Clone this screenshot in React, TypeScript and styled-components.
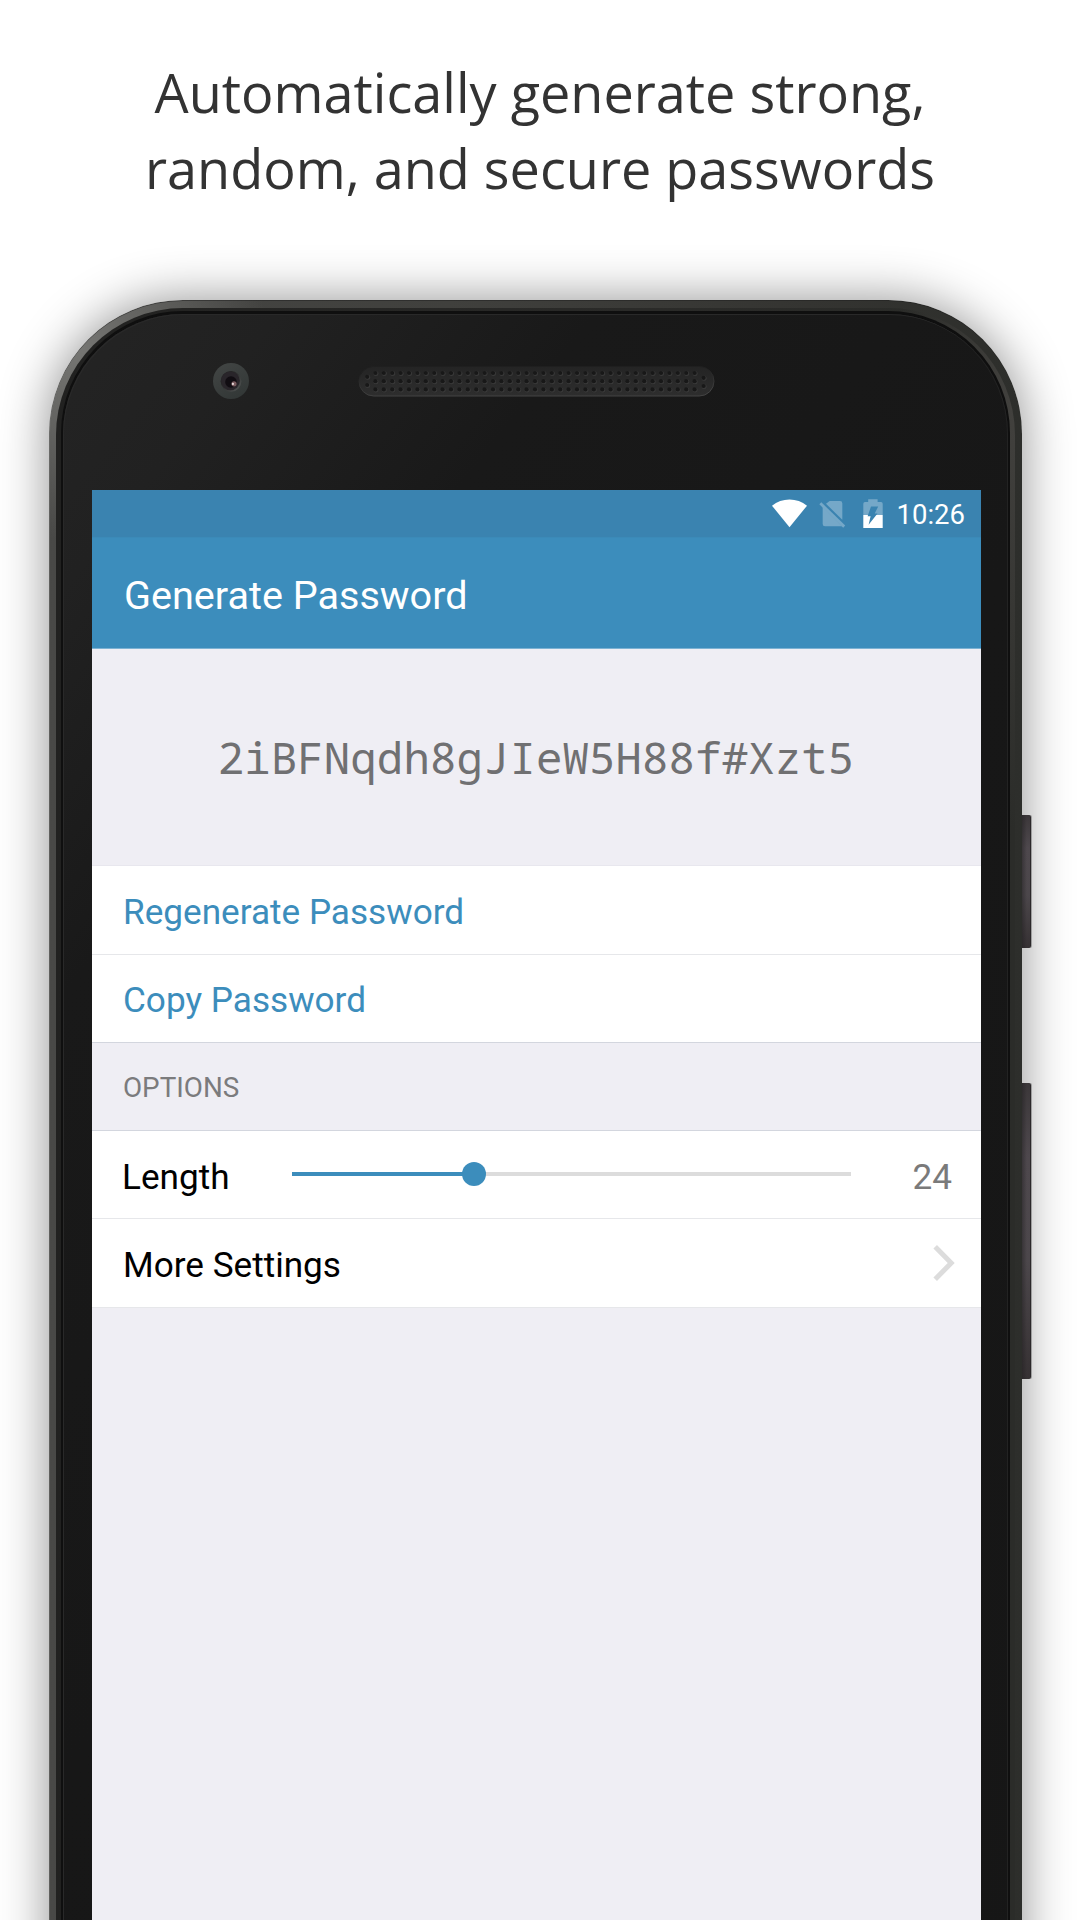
import React from 'react';
import styled, { createGlobalStyle } from 'styled-components';

const BLUE = '#3c8dbc';

const GlobalStyle = createGlobalStyle`
  *, *::before, *::after { box-sizing: border-box; }
  html, body { margin: 0; padding: 0; background: #fff; }
`;

const Page = styled.main`
  display: flex;
  flex-direction: column;
  width: 1080px;
  height: 1920px;
  overflow: hidden;
  background: #fff;
  font-family: Roboto, "Liberation Sans", sans-serif;
`;

const Headline = styled.h1`
  flex: none;
  height: 300px;
  margin: 0;
  padding-top: 55px;
  font-family: "Open Sans", "Noto Sans", sans-serif;
  font-size: 54px;
  font-weight: 400;
  line-height: 75.7px;
  text-align: center;
  color: #333;
`;

/* Phone body: metal edge, inner rim, black seam, glass */
const Body = styled.div`
  position: relative;
  flex: none;
  width: 973px;
  height: 1900px;
  margin-left: 49px;
  padding: 8px 7px 0;
  border-radius: 134px 134px 0 0;
  background:
    radial-gradient(circle at 30px 50px, rgba(120, 120, 117, 0.95), rgba(90, 90, 88, 0) 190px),
    linear-gradient(to right, #494947 0, #454543 50px, #40403d 400px, #343431 760px, #2d2e2b 100%);
  box-shadow: 0 0 50px rgba(0, 0, 0, 0.44), inset 0 1px 0 rgba(30, 30, 30, 0.5), inset 1px 0 0 rgba(120, 120, 118, 0.5);
`;

const Rim = styled.div`
  height: 100%;
  padding: 3px 5px 0;
  border-radius: 127px 127px 0 0;
  background:
    radial-gradient(ellipse 120px 420px at 100% 100px, #42413e, rgba(61, 60, 57, 0)),
    linear-gradient(to right, #212120, #2a2a28 60%, #2b2c29);
`;

const Seam = styled.div`
  height: 100%;
  padding: 3px 2px 0;
  border-radius: 122px 122px 0 0;
  background: #0f0f0f;
`;

const Glass = styled.div`
  display: flex;
  flex-direction: column;
  height: 100%;
  padding: 0 27px 0 29px;
  border-radius: 120px 120px 0 0;
  background: linear-gradient(128deg, #242424 0, #212121 170px, #191919 420px, #171717 900px, #161616 100%);
  box-shadow: inset 1px 1px 0 #292929, inset -1px 0 0 #232323;
`;

const Brow = styled.div`
  display: flex;
  align-items: flex-start;
  flex: none;
  height: 176px;
  padding: 49px 0 0 120px;
`;

const Speaker = styled.svg`
  margin: 3px 0 0 108px;
`;

const SideButton = styled.div<{ $top: number; $height: number }>`
  position: absolute;
  left: 973px;
  top: ${(p) => p.$top}px;
  width: 9px;
  height: ${(p) => p.$height}px;
  border-right: 1px solid #2b282a;
  border-radius: 0 2px 2px 0;
  background:
    linear-gradient(to right, rgba(30, 28, 30, 0.45), transparent 60%),
    linear-gradient(#3b3739, #4e484d 25%, #4c474b 60%, #363133);
  box-shadow: 1px 0 0 rgba(90, 90, 90, 0.45);
`;

const Screen = styled.section`
  display: flex;
  flex-direction: column;
  flex: 1;
  background: #efeef4;
`;

const StatusBar = styled.div`
  display: flex;
  justify-content: flex-end;
  align-items: flex-start;
  flex: none;
  height: 47px;
  padding-right: 16px;
  background: #3a83b0;
`;

const StatusIcons = styled.svg`
  flex: none;
  margin-right: 4px;
`;

const Clock = styled.time`
  font-size: 27.5px;
  line-height: 50px;
  color: #fff;
`;

const AppBar = styled.header`
  display: flex;
  align-items: center;
  flex: none;
  height: 112px;
  padding: 5px 32px 0;
  border-top: 1px solid #3b8ab8;
  border-bottom: 1px solid #7db2d3;
  background: ${BLUE};
`;

const Title = styled.h2`
  margin: 0;
  font-size: 39.6px;
  font-weight: 400;
  line-height: 46px;
  color: #fff;
`;

const Generated = styled.output`
  display: flex;
  justify-content: center;
  align-items: center;
  flex: none;
  height: 217px;
  padding-right: 1px;
  border-bottom: 1px solid #e8e7ee;
  font-family: "Noto Sans Mono", "DejaVu Sans Mono", monospace;
  font-size: 44px;
  letter-spacing: 0.12px;
  color: #707072;
`;

const Row = styled.div<{ $tone?: string; $line?: string; $height?: number; $left?: number; $drop?: number }>`
  display: flex;
  align-items: center;
  flex: none;
  height: ${(p) => p.$height ?? 88}px;
  padding: ${(p) => p.$drop ?? 3}px 26px 0 ${(p) => p.$left ?? 31}px;
  border-bottom: 1px solid ${(p) => p.$line ?? '#e6e7ea'};
  background: #fff;
  font-size: 35.15px;
  color: ${(p) => p.$tone ?? '#000'};
`;

const SectionHeader = styled.div`
  display: flex;
  align-items: center;
  flex: none;
  height: 88px;
  padding: 2px 31px 0;
  border-bottom: 1px solid #d3d6de;
  font-size: 27.8px;
  color: #7b7b7d;
`;

const Label = styled.span`
  width: 170px;
`;

const Track = styled.div<{ $percent: number }>`
  display: flex;
  align-items: center;
  width: 559px;
  height: 4px;
  margin-bottom: 6px;
  background: linear-gradient(to right, ${BLUE} ${(p) => p.$percent}%, #dcdcdc ${(p) => p.$percent}%);
`;

const Thumb = styled.i<{ $percent: number }>`
  flex: none;
  width: 24px;
  height: 24px;
  margin-left: calc(${(p) => p.$percent}% - 12px);
  border-radius: 50%;
  background: ${BLUE};
`;

const Value = styled.span`
  margin-left: auto;
  margin-right: 3px;
  color: #7a7a7a;
`;

const Chevron = styled.svg`
  margin-left: auto;
  margin-bottom: 3px;
`;

const COLUMNS = Array.from({ length: 39 }, (_, i) => 17.4 + i * 8.4);
const HOLES: [number, number][] = [
  ...COLUMNS.flatMap((x) => [7, 15.2, 23.4].map((y) => [x, y] as [number, number])),
  [9.2, 10.8], [9.2, 19], [345.6, 11.8], [345.6, 20],
];

const Camera = () => (
  <svg width="38" height="38" viewBox="0 0 38 38">
    <defs>
      <linearGradient id="ring" x1="0" y1="0" x2="0.6" y2="1">
        <stop offset="0" stopColor="#434645" />
        <stop offset="1" stopColor="#333837" />
      </linearGradient>
      <linearGradient id="lip" x1="0" y1="0" x2="1" y2="1">
        <stop offset="0.3" stopColor="#252525" />
        <stop offset="1" stopColor="#565a59" />
      </linearGradient>
    </defs>
    <circle cx="19" cy="18" r="18" fill="url(#ring)" />
    <circle cx="19" cy="18.3" r="10.4" fill="url(#lip)" />
    <circle cx="18.4" cy="17.8" r="9.4" fill="#29252a" />
    <circle cx="19" cy="19" r="5.8" fill="#110d12" />
    <circle cx="22" cy="20.8" r="2.6" fill="#7b5c60" />
    <circle cx="20.9" cy="20.9" r="1.1" fill="#e6dcdc" />
  </svg>
);

const Grille = () => (
  <Speaker width="357" height="32" viewBox="0 0 357 32">
    <defs>
      <linearGradient id="grille" x1="0" y1="0" x2="0" y2="1">
        <stop offset="0" stopColor="#242424" />
        <stop offset="1" stopColor="#2e2e2e" />
      </linearGradient>
      <linearGradient id="edge" x1="0" y1="0" x2="0.25" y2="1">
        <stop offset="0.25" stopColor="#1f1f1f" />
        <stop offset="1" stopColor="#434343" />
      </linearGradient>
    </defs>
    <rect x="1" y="0.5" width="355" height="29.5" rx="14.7" fill="url(#grille)" stroke="url(#edge)" />
    {HOLES.map(([x, y], i) => (
      <g key={i}>
        <circle cx={x + 0.5} cy={y + 0.5} r="2.5" fill="#393939" />
        <circle cx={x} cy={y} r="2.1" fill="#181818" />
      </g>
    ))}
  </Speaker>
);

/* Wi-Fi, missing SIM and charging battery glyphs */
const Indicators = () => (
  <StatusIcons width="122" height="47" viewBox="771 490 122 47">
    <path d="M789.5 527.2 L772 505.7 C777 501.7 783 499.6 789.5 499.6 C796 499.6 802 501.7 807 505.7 Z" fill="#fff" />
    <g fill="#75a8c8">
      <path d="M829.6 501 H840 Q842.3 501 842.3 503.3 V519.8 L826 503.8 Z" />
      <path d="M822.7 506.8 L842 526.2 H825 Q822.7 526.2 822.7 524 Z" />
      <path d="M819.3 504.2 L821.3 502.2 L845.2 525.6 L843.2 527.8 Z" />
      <path d="M868.2 499.2 H877.6 V502 H881 Q882.7 502 882.7 503.8 V515 H863.3 V503.8 Q863.3 502 865 502 H868.2 Z" />
    </g>
    <path d="M863.3 515 H882.7 V528 H863.3 Z" fill="#fff" />
    <path d="M871 506.5 H878.2 L874.7 513.5 H877.5 L868.6 524.8 L870.6 516.3 H867.6 Z" fill="#3a83b0" />
  </StatusIcons>
);

const percent = 32.5;

export default function App() {
  return (
    <Page>
      <GlobalStyle />
      <Headline>
        Automatically generate strong,
        <br />
        random, and secure passwords
      </Headline>
      <Body>
        <SideButton $top={515} $height={133} />
        <SideButton $top={783} $height={296} />
        <Rim>
          <Seam>
            <Glass>
              <Brow>
                <Camera />
                <Grille />
              </Brow>
              <Screen>
                <StatusBar>
                  <Indicators />
                  <Clock>10:26</Clock>
                </StatusBar>
                <AppBar>
                  <Title>Generate Password</Title>
                </AppBar>
                <Generated>2iBFNqdh8gJIeW5H88f#Xzt5</Generated>
                <Row $tone={BLUE} $height={89}>Regenerate Password</Row>
                <Row $tone={BLUE} $line="#d3d6de">Copy Password</Row>
                <SectionHeader>OPTIONS</SectionHeader>
                <Row $left={30} $drop={5}>
                  <Label>Length</Label>
                  <Track $percent={percent}>
                    <Thumb $percent={percent} />
                  </Track>
                  <Value>24</Value>
                </Row>
                <Row $height={89}>
                  More Settings
                  <Chevron width="22" height="38" viewBox="0 0 22 38">
                    <path d="M2.2 2.7 L18.2 19 L2.2 35.3" fill="none" stroke="#dcdcdc" strokeWidth="5" />
                  </Chevron>
                </Row>
              </Screen>
            </Glass>
          </Seam>
        </Rim>
      </Body>
    </Page>
  );
}
